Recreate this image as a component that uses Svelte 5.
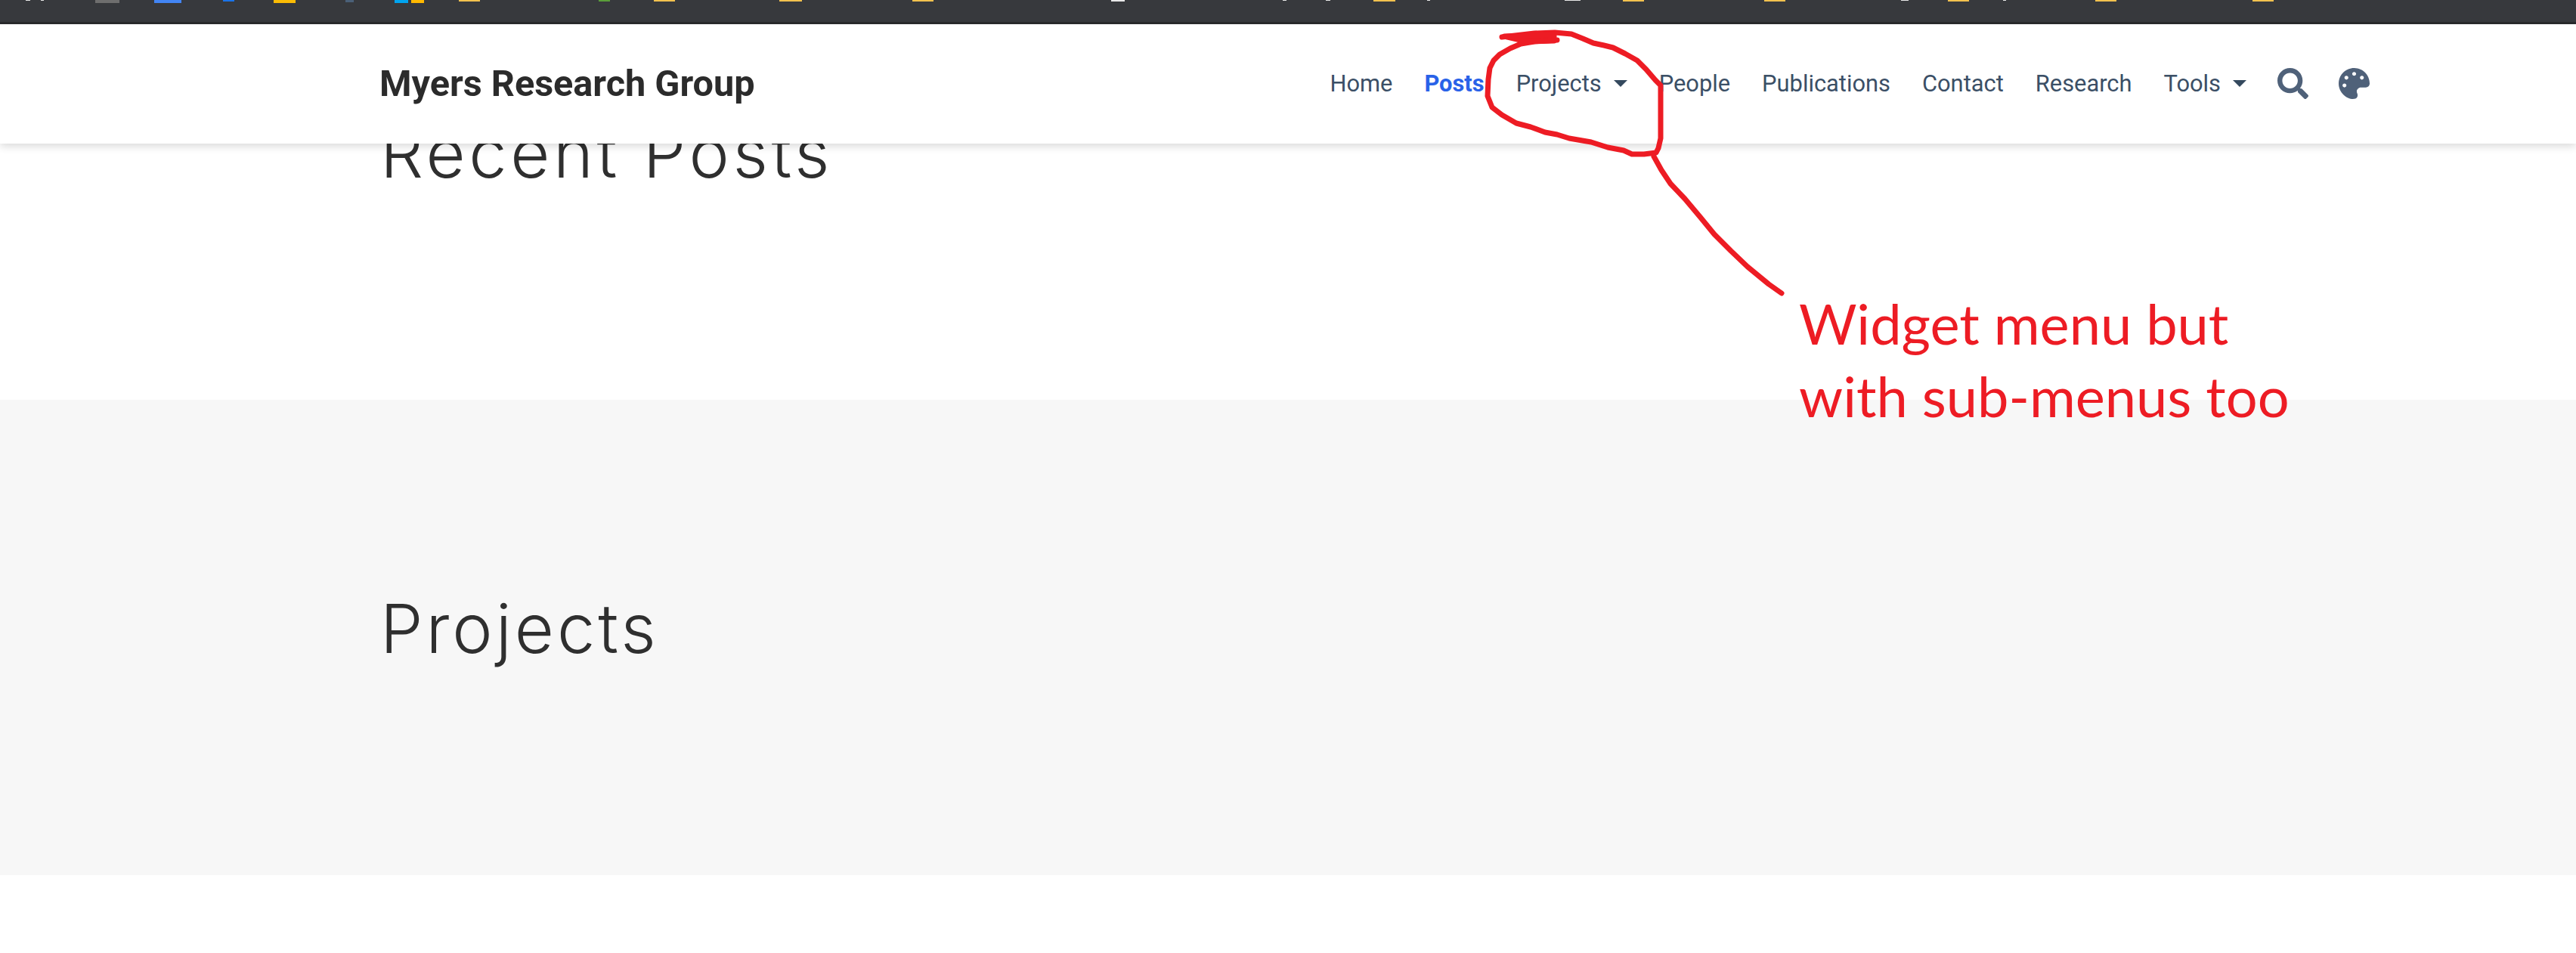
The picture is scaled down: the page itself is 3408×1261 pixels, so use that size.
<script>
  // slivers of the browser bookmark bar that show at the top edge: [from, to, height, colour]
  const yellow = '#f2c14e';
  const white = '#e8e8e8';
  const marks = [
    [34, 40, 1, white], [54, 58, 1, white], [126, 158, 4, '#6e6e6e'], [204, 240, 4, '#4285f4'],
    [295, 310, 2, '#1a73e8'], [362, 391, 4, '#fbbc05'], [457, 468, 3, '#4a6078'], [522, 540, 4, '#00a4ef'],
    [544, 561, 4, '#ffb900'], [607, 635, 2, yellow], [792, 807, 2, '#5a9e3a'], [865, 893, 2, yellow],
    [1031, 1061, 2, yellow], [1207, 1235, 2, yellow], [1470, 1488, 2, white], [1697, 1702, 1, white],
    [1754, 1760, 1, white], [1817, 1846, 2, yellow], [1888, 1892, 1, white], [2070, 2091, 1, white],
    [2147, 2175, 2, yellow], [2334, 2362, 2, yellow], [2515, 2525, 1, white], [2577, 2605, 2, yellow],
    [2650, 2654, 1, white], [2772, 2800, 2, yellow], [2980, 3008, 2, yellow]
  ];

  const links = [
    { label: 'Home' },
    { label: 'Posts', active: true },
    { label: 'Projects', caret: true },
    { label: 'People' },
    { label: 'Publications' },
    { label: 'Contact' },
    { label: 'Research' },
    { label: 'Tools', caret: true }
  ];

  const circle = 'M1987 49 L2030 44 L2057 43 L2079 45 L2094 51 L2108 57 L2122 60 L2134 63 L2150 71 L2166 80 L2178 92 L2190 106 L2197 113 L2197 183 L2194 196 L2191 202 L2175 204 L2159 204 L2148 199 L2127 195 L2105 188 L2076 183 L2060 178 L2044 175 L2025 168 L2006 163 L1987 152 L1974 142 L1968 127 L1969 105 L1971 90 L1976 80 L1984 72 L1998 64 L2012 58 L2030 55 L2060 53';
  const tail = 'M2188 207 L2198 225 L2210 243 L2229 263 L2250 288 L2268 310 L2290 332 L2312 353 L2340 376 L2357 388';
</script>

<div class="bookmarks">
  {#each marks as m, i}
    <span
      class="mark"
      style="margin-left:{m[0] - (i ? marks[i - 1][1] : 0)}px;width:{m[1] - m[0]}px;height:{m[2]}px;background:{m[3]}"
    ></span>
  {/each}
</div>

<nav class="navbar">
  <a class="brand" href="#top">Myers Research Group</a>
  <ul class="links">
    {#each links as link}
      <li class:active={link.active}>
        {link.label}{#if link.caret}<span class="caret"></span>{/if}
      </li>
    {/each}
    <li class="icon">
      <svg viewBox="0 0 512 512" width="41" height="41" aria-label="Search">
        <path d="M505 442.7L405.3 343c-4.5-4.5-10.6-7-17-7H372c27.6-35.3 44-79.7 44-128C416 93.1 322.9 0 208 0S0 93.1 0 208s93.1 208 208 208c48.3 0 92.7-16.4 128-44v16.3c0 6.4 2.5 12.5 7 17l99.7 99.7c9.4 9.4 24.6 9.4 33.9 0l28.3-28.3c9.4-9.4 9.4-24.6.1-34zM208 336c-70.7 0-128-57.2-128-128 0-70.7 57.2-128 128-128 70.7 0 128 57.2 128 128 0 70.7-57.2 128-128 128z" />
      </svg>
    </li>
    <li class="icon">
      <svg viewBox="0 0 512 512" width="41" height="41" aria-label="Theme">
        <path d="M204.3 5C104.9 24.4 24.8 104.3 5.2 203.4c-37 187 131.7 326.4 258.8 306.7 41.2-6.4 61.4-54.6 42.5-91.7-23.1-45.4 9.9-98.4 60.9-98.4h79.7c35.8 0 64.8-29.6 64.9-65.3C511.5 97.1 368.1-26.9 204.3 5zM96 320c-17.7 0-32-14.3-32-32s14.3-32 32-32 32 14.3 32 32-14.3 32-32 32zm32-128c-17.7 0-32-14.3-32-32s14.3-32 32-32 32 14.3 32 32-14.3 32-32 32zm128-64c-17.7 0-32-14.3-32-32s14.3-32 32-32 32 14.3 32 32-14.3 32-32 32zm128 64c-17.7 0-32-14.3-32-32s14.3-32 32-32 32 14.3 32 32-14.3 32-32 32z" />
      </svg>
    </li>
  </ul>
</nav>

<section class="recent">
  <h1>Recent Posts</h1>
</section>
<section class="projects">
  <h1>Projects</h1>
</section>
<div class="bottom"></div>

<!-- red pen annotation drawn on top of the screenshot -->
<svg class="pen" viewBox="0 0 3408 1261" width="3408" height="1261" aria-hidden="true">
  <path d={circle} />
  <path d="M1990 48 L2056 46 L2056 54 L2020 55 Z" class="blob" />
  <path d={tail} />
</svg>
<p class="note">Widget menu but<br />with sub-menus too</p>

<style>
  :global(body) {
    margin: 0;
    background: #fff;
    font-family: Roboto, sans-serif;
  }

  .bookmarks {
    display: flex;
    align-items: flex-start;
    height: 29px;
    background: #37393d;
    border-bottom: 3px solid #292a2c;
  }

  .mark {
    flex: none;
  }

  .navbar {
    position: relative;
    z-index: 2;
    display: flex;
    align-items: center;
    justify-content: space-between;
    height: 158px;
    padding: 0 253px 2px 502px;
    box-sizing: border-box;
    background: #fff;
    box-shadow: 0 4px 10px rgba(0, 0, 0, 0.14);
  }

  .brand {
    font-size: 48.6px;
    font-weight: 700;
    color: #2b2b2b;
    text-decoration: none;
  }

  .links {
    display: flex;
    align-items: center;
    margin: 0;
    padding: 0;
    list-style: none;
    font-size: 30.85px;
    color: #3b4f66;
  }

  .links li {
    padding: 0 21px;
  }

  .links .active {
    font-weight: 700;
    color: #2962e8;
  }

  .caret {
    display: inline-block;
    margin-left: 16px;
    vertical-align: 6px;
    border-top: 9px solid #34495e;
    border-left: 9px solid transparent;
    border-right: 9px solid transparent;
  }

  .links .icon {
    display: flex;
    padding: 0 20px;
  }

  .icon svg {
    fill: #4f6179;
  }

  h1 {
    margin: 0;
    font-family: Inter, sans-serif;
    font-size: 90px;
    font-weight: 300;
    line-height: 108px;
    letter-spacing: 4px;
    color: #2f2f2f;
  }

  .recent {
    display: flow-root;
    height: 339px;
    padding-left: 503px;
    box-sizing: border-box;
  }

  .recent h1 {
    margin-top: -41px;
    letter-spacing: 4.6px;
  }

  .projects {
    height: 629px;
    padding: 249px 0 0 503px;
    box-sizing: border-box;
    background: #f7f7f7;
  }

  .bottom {
    height: 103px;
  }

  .pen {
    position: absolute;
    top: 0;
    left: 0;
    z-index: 3;
    pointer-events: none;
  }

  .pen path {
    fill: none;
    stroke: #ed1c24;
    stroke-width: 7;
    stroke-linejoin: round;
    stroke-linecap: round;
  }

  .pen .blob {
    fill: #ed1c24;
  }

  .note {
    position: absolute;
    top: 380px;
    left: 2380px;
    z-index: 3;
    margin: 0;
    font-family: Lato, sans-serif;
    font-size: 74px;
    line-height: 96px;
    color: #ed1c24;
    white-space: nowrap;
  }
</style>
